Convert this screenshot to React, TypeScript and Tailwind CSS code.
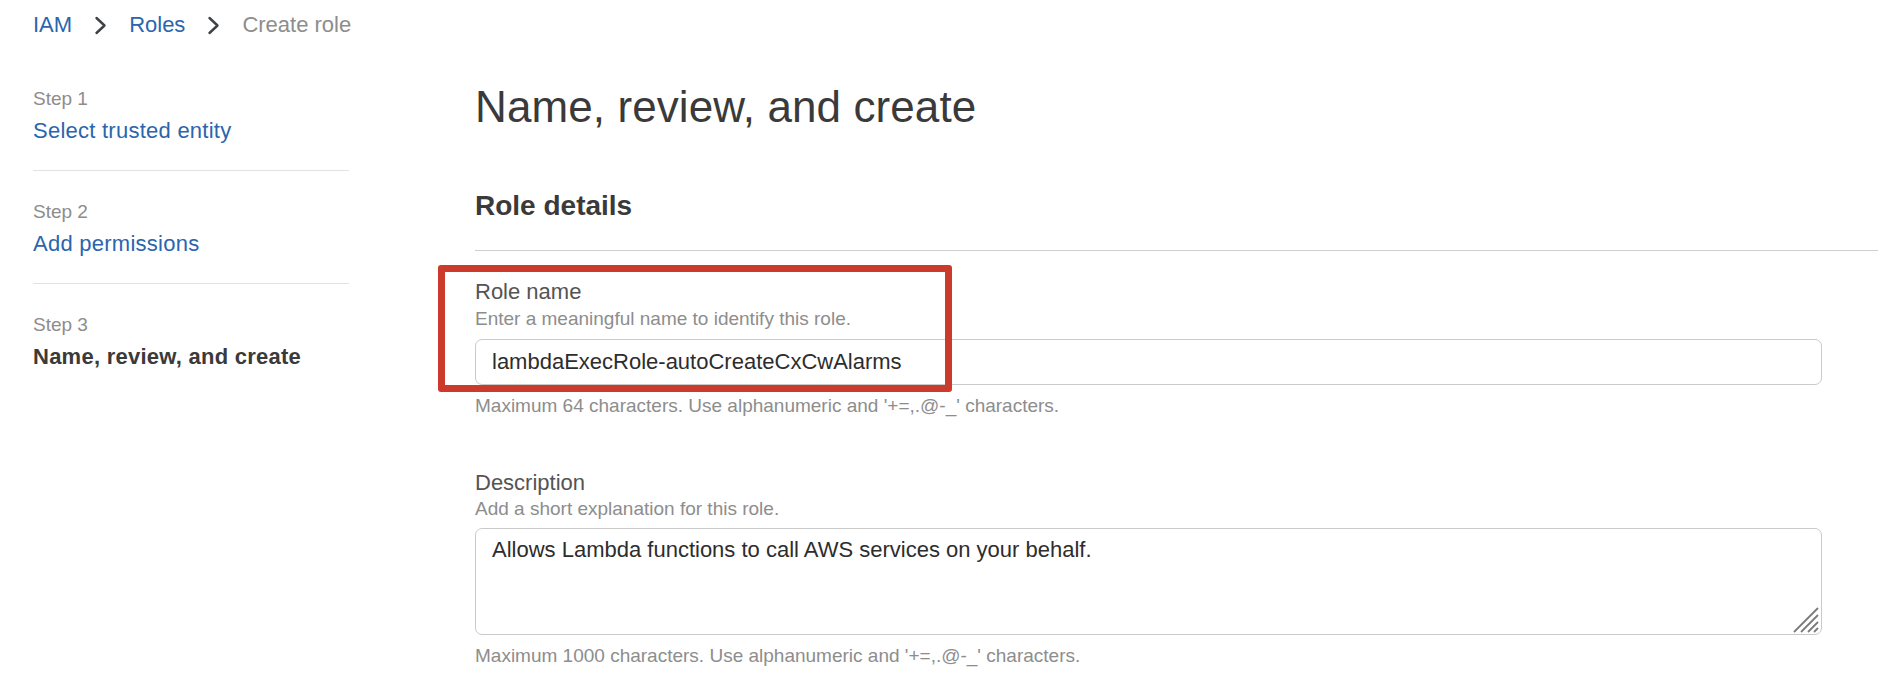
import React from 'react';

const Chevron = () => (
  <svg width="13" height="19" viewBox="0 0 13 19" fill="none">
    <polyline points="2.5,2 10.5,9.5 2.5,17" stroke="#3f4245" strokeWidth="2.4" strokeLinecap="round" strokeLinejoin="round" />
  </svg>
);

const ResizeGrip = () => (
  <svg width="26" height="26" viewBox="0 0 26 26" fill="none">
    <line x1="1" y1="25" x2="25" y2="1" stroke="#7a7a7a" strokeWidth="1.8" />
    <line x1="8" y1="25" x2="25" y2="8" stroke="#7a7a7a" strokeWidth="1.8" />
    <line x1="15" y1="25" x2="25" y2="15" stroke="#7a7a7a" strokeWidth="1.8" />
    <line x1="21" y1="25" x2="25" y2="21" stroke="#7a7a7a" strokeWidth="1.8" />
  </svg>
);

const steps = [
  { step: 'Step 1', label: 'Select trusted entity', active: false },
  { step: 'Step 2', label: 'Add permissions', active: false },
  { step: 'Step 3', label: 'Name, review, and create', active: true },
];

export default function App() {
  return (
    <div className="min-h-screen bg-white font-['Liberation_Sans',Arial,sans-serif] text-[#3a3a3a]">
      {/* Breadcrumb */}
      <div className="flex h-[50px] items-center gap-[22px] pl-[33px] text-[22px] leading-[30px]">
        <span className="text-[#2a65ae]">IAM</span>
        <Chevron />
        <span className="text-[#2a65ae]">Roles</span>
        <Chevron />
        <span className="text-[#8d8d8d]">Create role</span>
      </div>

      <div className="flex">
        {/* Wizard steps */}
        <aside className="w-[349px] shrink-0 pl-[33px] pt-[36px]">
          {steps.map((s, idx) => (
            <div
              key={s.step}
              className={`${idx > 0 ? 'pt-[28px]' : ''} ${idx < steps.length - 1 ? 'border-b border-[#e2e2e2] pb-[24px]' : ''}`}
            >
              <div className="text-[19px] leading-[26px] text-[#8d8d8d]">{s.step}</div>
              <div
                className={`mt-[4px] text-[22px] leading-[30px] tracking-[0.25px] ${s.active ? 'font-bold text-[#3a3a3a]' : 'text-[#2a65ae]'}`}
              >
                {s.label}
              </div>
            </div>
          ))}
        </aside>

        {/* Main */}
        <main className="flex-1 pl-[126px] pt-[31px]">
          <h1 className="text-[44px] leading-[52px] tracking-[0.1px] text-[#3a3a3a]">Name, review, and create</h1>

          <div className="mt-[55px] border-b border-[#cfcfcf] pb-[26px]">
            <h2 className="text-[28px] font-bold leading-[36px] text-[#3a3a3a]">Role details</h2>
          </div>

          <div className="relative pr-[56px] pt-[27px]">
            {/* annotation box */}
            <div className="pointer-events-none absolute left-[-37px] top-[14px] h-[127px] w-[514px] rounded-[3px] border-[7px] border-[#cc3a2c]" />

            <div className="text-[22px] leading-[28px] text-[#545454]">Role name</div>
            <div className="mt-[1px] text-[19px] leading-[24px] text-[#8d8d8d]">
              Enter a meaningful name to identify this role.
            </div>
            <input
              readOnly
              value="lambdaExecRole-autoCreateCxCwAlarms"
              className="mt-[8px] block h-[46px] w-full rounded-[7px] border border-[#cacaca] px-[16px] text-[22px] text-[#2d2d2d] outline-none"
            />
            <div className="mt-[9px] text-[19px] leading-[24px] text-[#8d8d8d]">
              Maximum 64 characters. Use alphanumeric and '+=,.@-_' characters.
            </div>

            <div className="mt-[51px] text-[22px] leading-[28px] text-[#545454]">Description</div>
            <div className="mt-[0px] text-[19px] leading-[24px] text-[#8d8d8d]">
              Add a short explanation for this role.
            </div>
            <div className="relative mt-[7px]">
              <textarea
                readOnly
                value="Allows Lambda functions to call AWS services on your behalf."
                className="block h-[107px] w-full resize-none rounded-[7px] border border-[#cacaca] px-[16px] py-[7px] text-[22px] leading-[28px] text-[#2d2d2d] outline-none"
              />
              <div className="pointer-events-none absolute bottom-[2px] right-[3px]">
                <ResizeGrip />
              </div>
            </div>
            <div className="mt-[9px] text-[19px] leading-[24px] text-[#8d8d8d]">
              Maximum 1000 characters. Use alphanumeric and '+=,.@-_' characters.
            </div>
          </div>
        </main>
      </div>
    </div>
  );
}
